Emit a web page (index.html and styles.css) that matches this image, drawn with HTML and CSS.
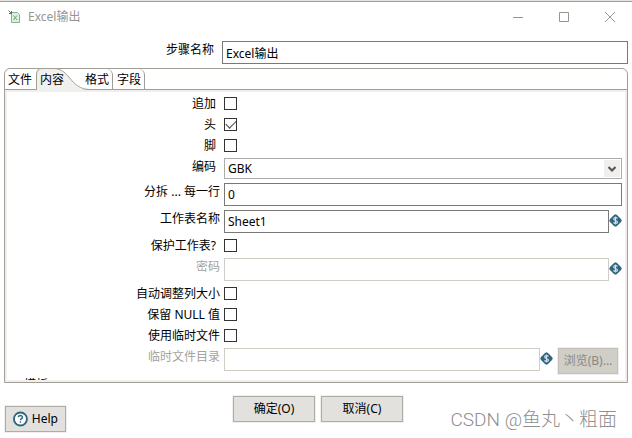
FILE: index.html
```html
<!DOCTYPE html>
<html lang="zh-CN">
<head>
<meta charset="utf-8">
<title>Excel输出</title>
<link rel="stylesheet" href="styles.css">
</head>
<body>
<svg class="defs" aria-hidden="true">
  <symbol id="variable" viewBox="0 0 13 13">
    <path d="M6.500 0.300 8 1 12 5 12.700 6.500 12 8 8 12 6.500 12.700 5 12 1 8 0.300 6.500 1 5 5 1Z" fill="#2f6580"/>
    <path d="M8.500 4.300C7.500 3.300 4.700 3.300 4.700 5S8.500 6.200 8.500 8 5.500 9.600 4.400 8.500M6.500 2.500V10.500" fill="none" stroke="#d5e2e8" stroke-width="1.200"/>
  </symbol>
</svg>
<header class="titlebar">
  <svg class="app-icon" viewBox="0 0 13 13" aria-hidden="true">
    <path d="M3.500 2.500H9.500L11.500 4.500V12.500H3.500Z" fill="#dcf0dc" stroke="#83b295"/>
    <path d="M5.500 5.500 9 10M9 5.500 5.500 10" stroke="#6da783" fill="none"/>
    <path d="M0.500 0.500 3.500 3.500M3.500 1V3.500H1" stroke="#5c6f72" fill="none"/>
  </svg>
  <h1>Excel输出</h1>
  <div class="window-controls">
    <button aria-label="最小化"><svg viewBox="0 0 10 10"><path d="M0 5.500H10"/></svg></button>
    <button aria-label="最大化"><svg viewBox="0 0 10 10"><path d="M0.500 0.500H9.500V9.500H0.500Z"/></svg></button>
    <button aria-label="关闭"><svg viewBox="0 0 10 10"><path d="M0 0 10 10M10 0 0 10"/></svg></button>
  </div>
</header>
<div class="step-name">
  <label for="step">步骤名称</label>
  <input class="text" id="step" type="text" value="Excel输出">
</div>
<main class="folder">
  <div class="tabs" role="tablist">
    <button class="tab" role="tab">文件</button>
    <button class="tab selected" role="tab" aria-selected="true">
      <svg class="tab-shape" viewBox="0 0 54 22" aria-hidden="true">
        <path class="tab-fill" d="M0 22V6Q0 0.500 6 0.500H18C34 0.500 34 21.500 51 21.500V22Z"/>
        <path class="tab-line" d="M0.500 22V6Q1 0.500 6 0.500H18C34 0.500 34 21.500 54 21.500"/>
      </svg>
      <span>内容</span>
    </button>
    <button class="tab" role="tab">格式</button>
    <button class="tab" role="tab">字段</button>
  </div>
  <form class="panel">
    <div class="row check"><label for="append">追加</label><input id="append" type="checkbox"></div>
    <div class="row check"><label for="head">头</label><input id="head" type="checkbox" checked></div>
    <div class="row check"><label for="foot">脚</label><input id="foot" type="checkbox"></div>
    <div class="row inset">
      <label for="encoding">编码</label>
      <div class="select">
        <select id="encoding"><option>GBK</option></select>
        <span class="arrow"><svg viewBox="0 0 8 6" aria-hidden="true"><path d="M0.500 1 4 4.500 7.500 1"/></svg></span>
      </div>
    </div>
    <div class="row"><label for="split">分拆 ... 每一行</label><input class="text" id="split" type="text" value="0"></div>
    <div class="row"><label for="sheet">工作表名称</label><div class="field"><input class="text" id="sheet" type="text" value="Sheet1"><svg class="variable"><use href="#variable"/></svg></div></div>
    <div class="row check"><label for="protect">保护工作表?</label><input id="protect" type="checkbox"></div>
    <div class="row disabled"><label for="password">密码</label><div class="field"><input class="text" id="password" type="password" disabled><svg class="variable"><use href="#variable"/></svg></div></div>
    <div class="row check wide"><label for="autosize">自动调整列大小</label><input id="autosize" type="checkbox"></div>
    <div class="row check wide"><label for="nulls">保留 NULL 值</label><input id="nulls" type="checkbox"></div>
    <div class="row check wide"><label for="temp">使用临时文件</label><input id="temp" type="checkbox"></div>
    <div class="row disabled">
      <label for="dir">临时文件目录</label>
      <div class="field"><input class="text" id="dir" type="text" disabled><svg class="variable"><use href="#variable"/></svg><button class="button browse" type="button" disabled>浏览(B)...</button></div>
    </div>
    <div class="group-title">模板</div>
  </form>
</main>
<footer class="actions">
  <button class="button help"><svg viewBox="0 0 16 16" aria-hidden="true"><circle cx="8" cy="8" r="7" fill="#fff" stroke="#2f6580" stroke-width="2"/><path d="M5.800 6.200C5.800 3.400 10.300 3.600 10.200 6.200 10.100 7.600 8 7.600 8 9.400M8 10.500V12" fill="none" stroke="#2f6580" stroke-width="1.500"/></svg>Help</button>
  <div class="confirm">
    <button class="button">确定(O)</button>
    <button class="button">取消(C)</button>
  </div>
  <span class="watermark">CSDN @鱼丸丶粗面</span>
</footer>
</body>
</html>
```
FILE: styles.css
```css
* {
  box-sizing: border-box;
}

body {
  display: flex;
  flex-direction: column;
  height: 100vh;
  margin: 0;
  overflow: hidden;
  border-top: 1px solid #e4e3df;
  background: #fff;
  color: #000;
  font: 12px/18px "Noto Sans", "Noto Sans CJK SC", sans-serif;
}

button,
input,
select {
  margin: 0;
  color: inherit;
  font: inherit;
}

.defs {
  display: none;
}

.titlebar {
  display: flex;
  align-items: center;
  height: 30px;
  padding: 0 17px 0 8px;
  border-top: 1px solid #a09f98;
}

.app-icon {
  width: 13px;
  height: 13px;
}

h1 {
  flex: 1;
  margin: 0 0 0 7px;
  color: #97958e;
  font-size: 12px;
  font-weight: 400;
}

.window-controls {
  display: flex;
  gap: 36px;
}

.window-controls button {
  display: flex;
  padding: 0;
  border: 0;
  background: none;
}

.window-controls svg {
  width: 10px;
  height: 10px;
  fill: none;
  stroke: #97958e;
}

.step-name {
  display: grid;
  grid-template-columns: 214px 1fr;
  gap: 8px;
  margin: 10px 4px 0 0;
}

.step-name label,
.row label {
  text-align: right;
}

.text {
  width: 100%;
  min-width: 0;
  height: 23px;
  padding: 0 3px;
  border: 1px solid #7a7977;
  border-radius: 0;
  background: #fff;
}

.folder {
  display: flex;
  flex: 1;
  flex-direction: column;
  min-height: 0;
  margin: 4px 4px 0;
  border: 1px solid #a09e97;
  border-radius: 6px 6px 0 0;
}

.tabs {
  display: flex;
  height: 21px;
  border-bottom: 1px solid #a09e97;
}

.tab {
  position: relative;
  height: 20px;
  padding: 2px 3px 0;
  border: 0;
  border-right: 1px solid #a09e97;
  border-radius: 0 6px 0 0;
  background: none;
}

.tab:first-child {
  border-right: 0;
}

.tab.selected {
  padding: 2px 18px 0 5px;
  border: 0;
}

.tab:last-child {
  padding-left: 4px;
}

.tab span {
  position: relative;
}

.tab-shape {
  position: absolute;
  top: -1px;
  left: 1px;
  width: 54px;
  height: 22px;
}

.tab-fill {
  fill: #f0f0ef;
}

.tab-line {
  fill: none;
  stroke: #a09e97;
}

.panel {
  flex: 1;
  min-height: 0;
  padding: 1px 3px 0 0;
  overflow: hidden;
  border: 2px solid #f0efee;
}

.row {
  display: grid;
  grid-template-columns: 213px 1fr;
  gap: 4px;
  margin: 2px 0 4px;
}

.row.inset label,
.row.check label {
  padding-right: 4px;
}

.row.check.wide label {
  padding-right: 0;
}

.row.check {
  align-items: center;
  height: 21px;
  margin: 0;
}

.row.check + .row:not(.check) {
  margin-top: 2px;
}

.row:not(.check):has(+ .check) {
  margin-bottom: 2px;
}

.disabled {
  color: #a5a39b;
}

.disabled .text {
  border-color: #cfcdc5;
}

input[type="checkbox"] {
  display: grid;
  place-content: center;
  width: 13px;
  height: 13px;
  border: 1px solid #333;
  background: #fff;
  appearance: none;
}

input[type="checkbox"]:checked::after {
  width: 9px;
  height: 5px;
  margin-bottom: 3px;
  border: solid #444;
  border-width: 0 0 1px 1px;
  content: "";
  transform: rotate(-45deg);
}

.select {
  position: relative;
}

.select select {
  display: block;
  width: 100%;
  height: 21px;
  padding: 0 3px;
  border: 1px solid #adaca9;
  border-radius: 0;
  background: #fff;
  appearance: none;
}

.arrow {
  position: absolute;
  top: 2px;
  right: 2px;
  display: grid;
  place-items: center;
  width: 16px;
  height: 17px;
  background: #f0efee;
  pointer-events: none;
}

.arrow svg {
  width: 8px;
  height: 6px;
  fill: none;
  stroke: #555;
  stroke-width: 2;
}

.field {
  display: flex;
  align-items: flex-start;
}

.field .text {
  flex: 1;
}

.variable {
  flex: none;
  width: 13px;
  height: 13px;
  margin-top: 4px;
}

.button {
  height: 26px;
  padding: 0;
  border: 1px solid #adaca5;
  border-radius: 0;
  outline: 1px solid #f0efee;
  outline-offset: 0;
  background: #e2e1de;
}

.browse {
  flex: none;
  width: 60px;
  margin: 0 4px 0 5px;
  border-color: #c2c0b8;
  background: #d0cec7;
  color: #8b8982;
}

.group-title {
  margin-top: -2px;
  padding-left: 17px;
}

.actions {
  display: grid;
  flex: none;
  grid-template-columns: minmax(0, 1fr) auto minmax(0, 1fr);
  align-items: end;
  height: 55px;
  padding: 0 1px 6px 5px;
}

.help {
  display: flex;
  gap: 4px;
  align-items: center;
  justify-self: start;
  width: 61px;
  padding: 0 7px;
}

.help svg {
  width: 16px;
  height: 16px;
}

.confirm {
  display: flex;
  gap: 6px;
  align-self: start;
  padding-top: 13px;
}

.confirm .button {
  width: 82px;
}

.watermark {
  justify-self: end;
  padding-right: 14px;
  color: #8f8f8f;
  font-family: Roboto, "Noto Sans CJK SC", sans-serif;
  font-size: 19px;
  font-weight: 300;
  line-height: 24px;
  white-space: nowrap;
}
```
